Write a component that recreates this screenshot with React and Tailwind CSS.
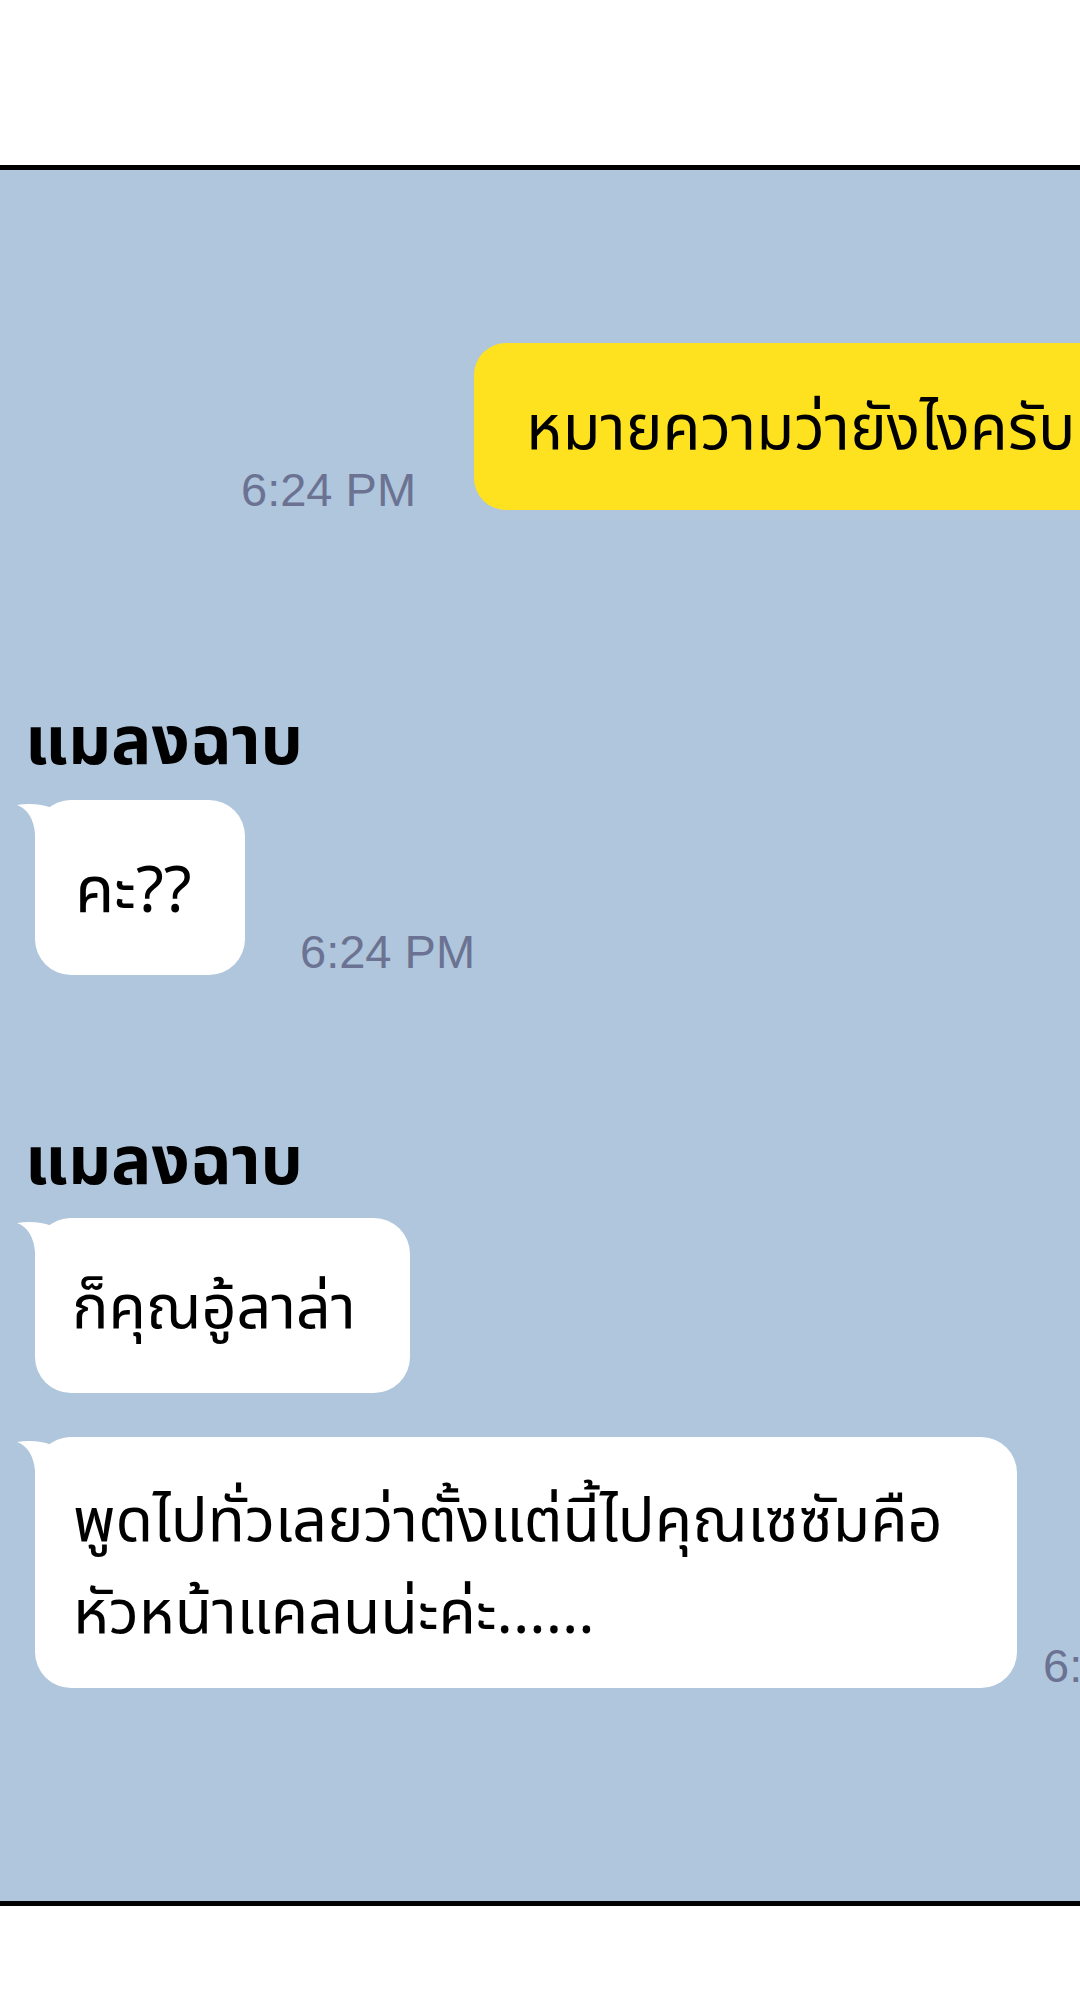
import React from 'react';

const Tail = () => (
  <svg
    className="absolute left-[-18px] top-0"
    width="60"
    height="44"
    viewBox="0 0 60 44"
  >
    <path
      d="M0 5 C12 3 25 4 35 8 C40 4 46 1 56 0 L60 0 L60 44 L18 44 L18 34 C17 20 11 9 0 5 Z"
      fill="#ffffff"
    />
  </svg>
);

const Time = ({ className = '' }) => (
  <span
    className={`shrink-0 font-['Liberation_Sans',Arial,sans-serif] text-[47px] leading-none text-[#6b7292] ${className}`}
  >
    6:24 PM
  </span>
);

const Name = ({ className = '' }) => (
  <div className={`pl-[25px] text-[67px] font-bold leading-[60px] text-black ${className}`}>
    แมลงฉาบ
  </div>
);

const Bubble = ({ children, className = '' }) => (
  <div className={`relative shrink-0 rounded-[36px] bg-white text-black ${className}`}>
    <Tail />
    <div className="relative">{children}</div>
  </div>
);

export default function App() {
  return (
    <div className="w-[1080px] h-[2000px] bg-white font-['Noto_Sans_Thai','Noto_Sans',sans-serif]">
      <div className="h-[165px]" />
      <div className="h-[1741px] overflow-hidden border-y-[5px] border-black bg-[#afc6dc]">
        {/* outgoing */}
        <div className="mt-[173px] flex items-end gap-[58px] pl-[241px]">
          <Time className="mb-[-3px]" />
          <div className="flex h-[167px] w-[700px] shrink-0 items-center rounded-[32px] bg-[#fee21f] pl-[52px] pt-[8px] text-[62px] text-black">
            หมายความว่ายังไงครับ
          </div>
        </div>

        {/* first incoming */}
        <Name className="mt-[204px]" />
        <div className="mt-[26px] flex items-end gap-[55px] pl-[35px]">
          <Bubble className="flex h-[175px] w-[210px] items-center pl-[40px] pt-[10px] text-[64px]">
            คะ??
          </Bubble>
          <Time />
        </div>

        {/* second incoming */}
        <Name className="mt-[159px]" />
        <div className="mt-[24px] pl-[35px]">
          <Bubble className="flex h-[175px] w-[375px] items-center pl-[37px] pt-[8px] text-[61px]">
            ก็คุณอู้ลาล่า
          </Bubble>
        </div>
        <div className="mt-[44px] flex items-end gap-[26px] pl-[35px]">
          <Bubble className="flex h-[251px] w-[982px] items-center pl-[38px] pt-[10px] text-[61px] leading-[92px]">
            <span>
              พูดไปทั่วเลยว่าตั้งแต่นี้ไปคุณเซซัมคือ
              <br />
              หัวหน้าแคลนน่ะค่ะ......
            </span>
          </Bubble>
          <Time className="mb-[-1px]" />
        </div>
      </div>
    </div>
  );
}
